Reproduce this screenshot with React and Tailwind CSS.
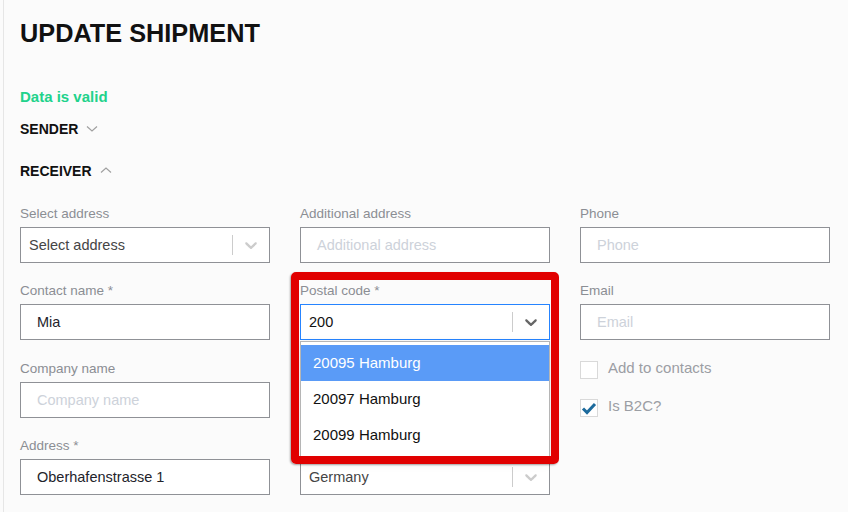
import React from "react";

const Chevron = ({ className }) => (
  <svg viewBox="0 0 20 20" width="20" height="20" className={className} fill="currentColor">
    <path d="M4.516 7.548c0.436-0.446 1.043-0.481 1.576 0l3.908 3.747 3.908-3.747c0.533-0.481 1.141-0.446 1.574 0 0.436 0.445 0.408 1.197 0 1.615-0.406 0.418-4.695 4.502-4.695 4.502-0.217 0.223-0.502 0.335-0.787 0.335s-0.57-0.112-0.789-0.335c0 0-4.287-4.084-4.695-4.502s-0.436-1.17 0-1.615z" />
  </svg>
);

const Label = ({ children }) => (
  <div className="h-5 pt-px text-[13.5px] leading-5 text-[#8b8e94] mb-1">{children}</div>
);

const TextInput = ({ value, placeholder }) => (
  <div className="h-9 border border-[#8f9196] bg-white flex items-center pl-4 pt-[2px] text-[14.5px]">
    {value ? (
      <span className="text-[#23232b]">{value}</span>
    ) : placeholder ? (
      <span className="text-[#cdd2da]">{placeholder}</span>
    ) : null}
  </div>
);

const SelectBox = ({ value, dark, focused, children }) => (
  <div className="relative">
    <div
      className={
        "h-9 border bg-white flex items-center " +
        (focused ? "border-[#2684ff]" : "border-[#8f9196]")
      }
    >
      <span className={"flex-1 pl-2 pt-[2px] text-[14.5px] " + (dark ? "text-[#111]" : "text-[#454545]")}>{value}</span>
      <span className="w-px h-5 bg-[#cccccc]" />
      <span className="w-9 flex items-center justify-center">
        <Chevron className={dark ? "text-[#666]" : "text-[#cccccc]"} />
      </span>
    </div>
    {children}
  </div>
);

const Checkbox = ({ checked, label }) => (
  <div className="flex items-center h-[18px]">
    <div className="w-[18px] h-[18px] border border-[#d9d9d9] bg-white relative">
      {checked && (
        <svg viewBox="0 0 18 18" width="18" height="18" className="absolute -left-px -top-px">
          <path d="M3 9.5 L7 13.5 L15 5" fill="none" stroke="#1d6b9d" strokeWidth="3" />
        </svg>
      )}
    </div>
    <span className="ml-[10px] -mt-[3px] text-[15px] text-[#9b9ea4]">{label}</span>
  </div>
);

export default function App() {
  return (
    <div className="relative w-full min-h-[512px] bg-[#fbfbfb] font-['Liberation_Sans',Arial,sans-serif] overflow-hidden">
      <div className="ml-[3px] min-h-[512px] border-l border-[#e6e6e6] pl-4 pr-4">
        <h1 className="pt-[19px] text-[25.3px] leading-[28px] font-bold text-[#111]">UPDATE SHIPMENT</h1>
        <div className="mt-[40px] text-[15px] leading-5 font-bold text-[#21d28b]">Data is valid</div>
        <div className="mt-[12px] flex items-center h-5 text-[14px] font-bold text-[#111]">
          SENDER
          <svg width="12" height="8" viewBox="0 0 12 8" className="ml-[8px]">
            <path d="M1 1.5 L6 6 L11 1.5" fill="none" stroke="#a0a0a0" strokeWidth="1.2" />
          </svg>
        </div>
        <div className="mt-[22px] flex items-center h-5 text-[14px] font-bold text-[#111]">
          RECEIVER
          <svg width="12" height="8" viewBox="0 0 12 8" className="ml-[8px] -mt-[3px]">
            <path d="M1 6.5 L6 2 L11 6.5" fill="none" stroke="#a0a0a0" strokeWidth="1.2" />
          </svg>
        </div>

        <div className="mt-[22px] grid grid-cols-[250px_250px_250px] gap-x-[30px] gap-y-[17px]">
          <div>
            <Label>Select address</Label>
            <SelectBox value="Select address" />
          </div>
          <div>
            <Label>Additional address</Label>
            <TextInput placeholder="Additional address" />
          </div>
          <div>
            <Label>Phone</Label>
            <TextInput placeholder="Phone" />
          </div>

          <div>
            <Label>Contact name *</Label>
            <TextInput value="Mia" />
          </div>
          <div className="relative z-10">
            <Label>Postal code *</Label>
            <SelectBox value="200" dark focused>
              <div className="absolute left-0 right-0 top-full mt-px bg-white border border-[#b5b5b5] shadow-[0_4px_11px_rgba(0,0,0,0.1)] pt-[3px] pb-1">
                <div className="h-9 flex items-center pl-3 bg-[#5a9bf7] text-white text-[15px]">20095 Hamburg</div>
                <div className="h-9 flex items-center pl-3 text-[#111] text-[15px]">20097 Hamburg</div>
                <div className="h-9 flex items-center pl-3 text-[#111] text-[15px]">20099 Hamburg</div>
              </div>
            </SelectBox>
          </div>
          <div>
            <Label>Email</Label>
            <TextInput placeholder="Email" />
          </div>

          <div className="mt-px">
            <Label>Company name</Label>
            <TextInput placeholder="Company name" />
          </div>
          <div className="mt-px">
            <Label />
            <TextInput />
          </div>
          <div className="mt-px pt-[3px] flex flex-col gap-5">
            <Checkbox label="Add to contacts" />
            <Checkbox checked label="Is B2C?" />
          </div>

          <div>
            <Label>Address *</Label>
            <TextInput value="Oberhafenstrasse 1" />
          </div>
          <div>
            <Label />
            <SelectBox value="Germany" />
          </div>
          <div />
        </div>
      </div>
      <div className="absolute left-[291px] top-[272px] w-[268px] h-[192px] border-[8px] border-[#e10000] rounded-[5px] shadow-[-1px_1px_2px_rgba(0,0,0,0.35)] z-20" />
    </div>
  );
}
